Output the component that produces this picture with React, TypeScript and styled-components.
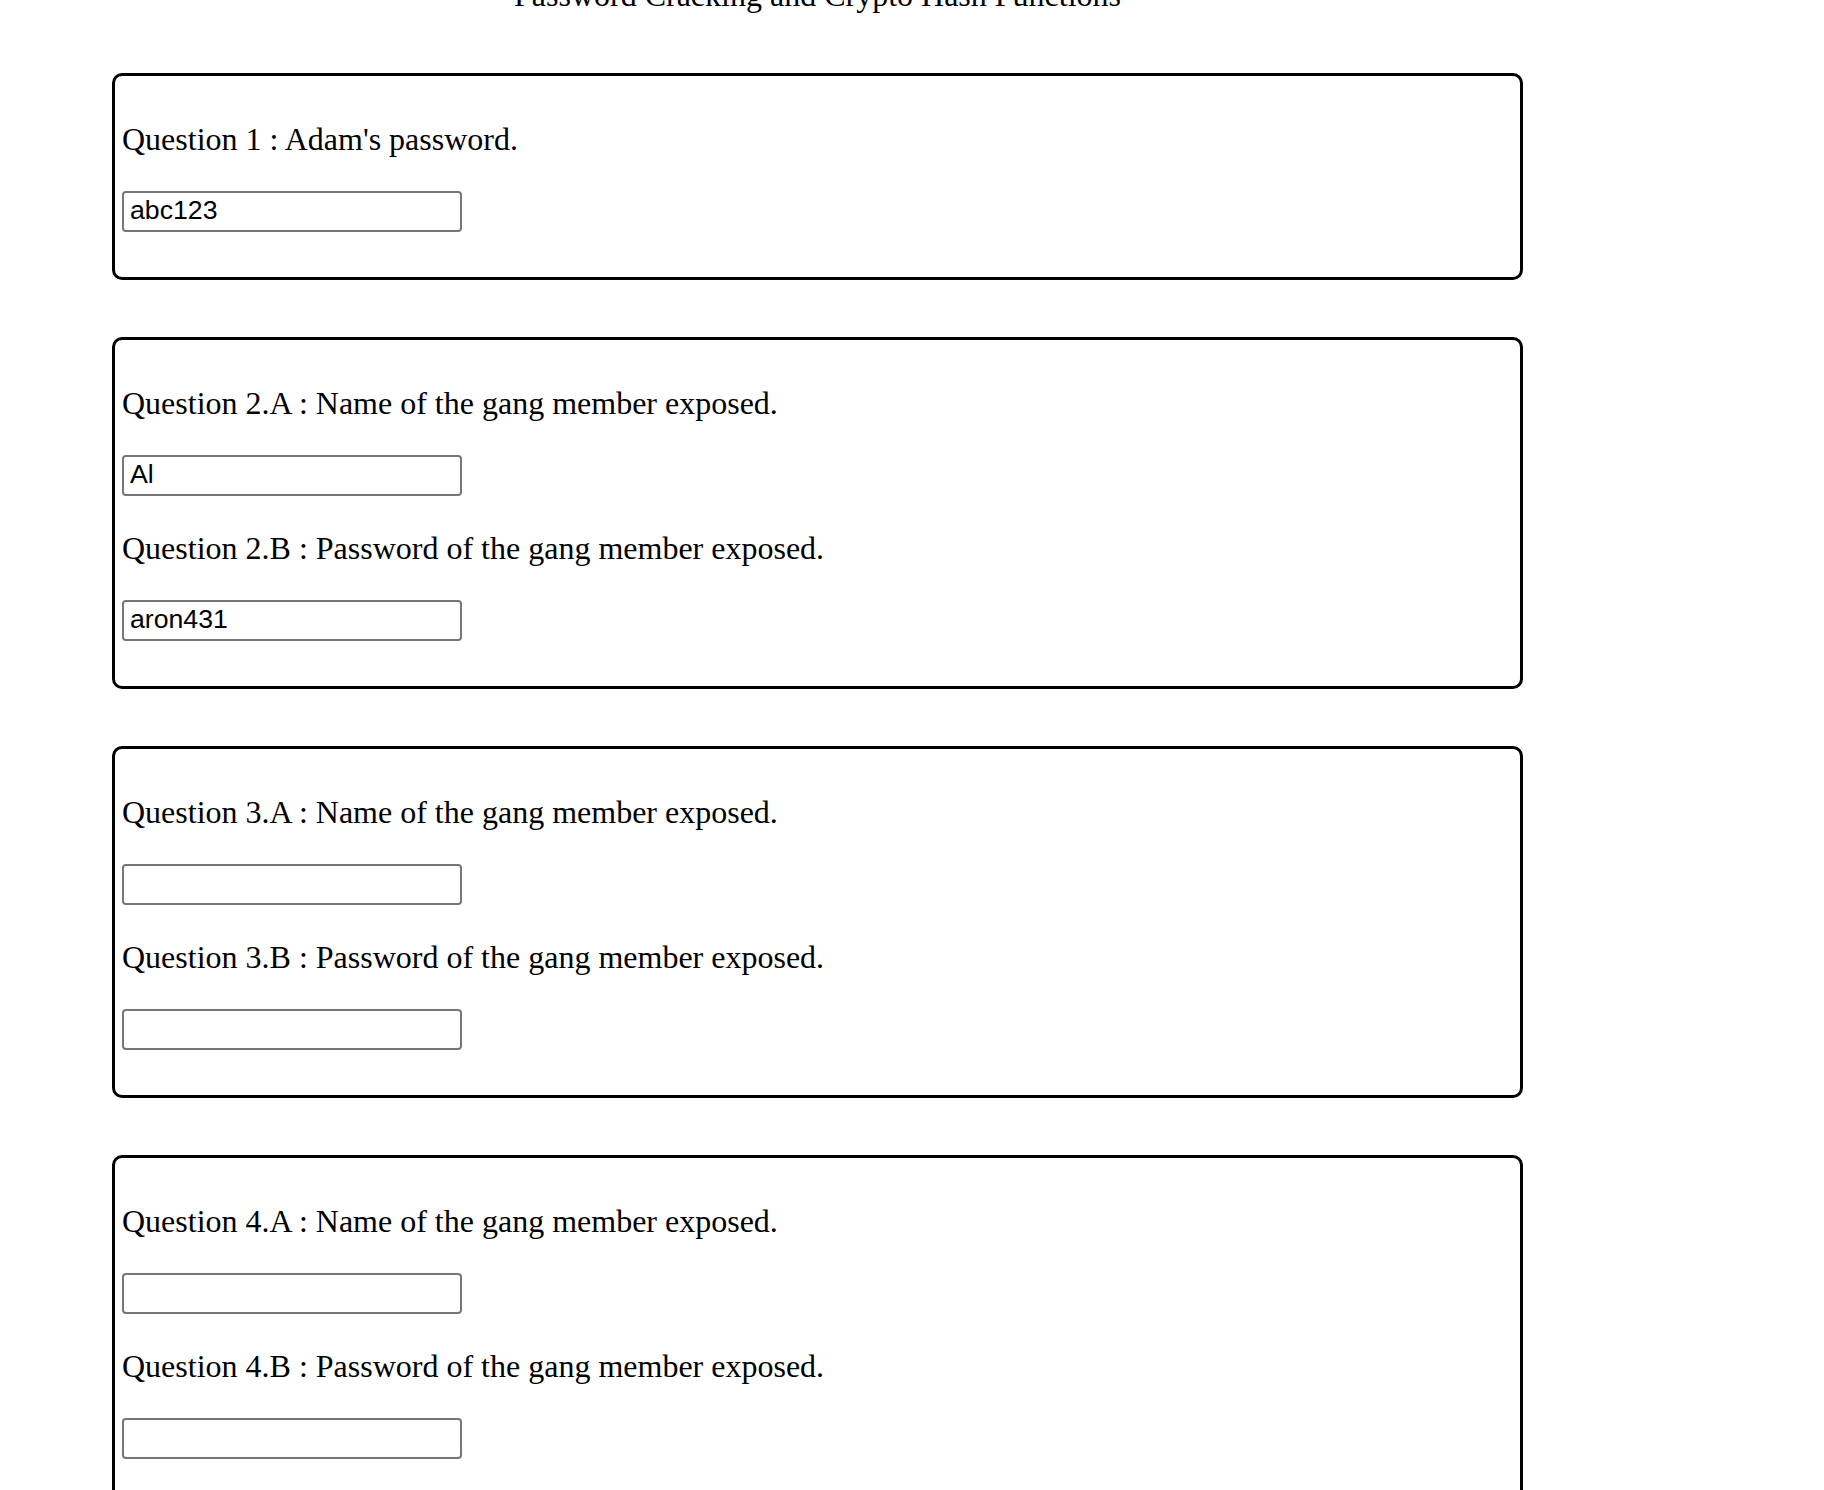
import React from "react";
import styled, { createGlobalStyle } from "styled-components";

const GlobalStyle = createGlobalStyle`
  html, body {
    margin: 0;
    padding: 0;
    background: #ffffff;
    overflow: hidden;
  }
  body {
    font-family: "Liberation Serif", "Times New Roman", serif;
    color: #000000;
  }
`;

const Page = styled.main`
  display: flex;
  flex-direction: column;
  width: 1411px;
  margin: -23px 0 0 112px;
`;

const Title = styled.h1`
  margin: 0 0 60px;
  font-size: 32px;
  line-height: 36px;
  font-weight: normal;
  text-align: center;
`;

const Cards = styled.div`
  display: flex;
  flex-direction: column;
  gap: 57px;
`;

const Card = styled.section`
  display: flex;
  flex-direction: column;
  align-items: flex-start;
  gap: 34px;
  padding: 45px 7px 45px;
  border: 3px solid #000000;
  border-radius: 10px;
`;

const Label = styled.label`
  display: block;
  font-size: 32px;
  line-height: 36px;
`;

const Answer = styled.input`
  box-sizing: border-box;
  display: block;
  width: 340px;
  height: 41px;
  margin: 0;
  padding: 0 6px 2px;
  border: 2px solid #767676;
  border-radius: 4px;
  background: #ffffff;
  font-family: "Liberation Sans", Arial, sans-serif;
  font-size: 26.67px;
  color: #000000;
  outline: none;
`;

type Question = { id: string; label: string; value: string };

const groups: Question[][] = [
  [{ id: "q1", label: "Question 1 : Adam's password.", value: "abc123" }],
  [
    { id: "q2a", label: "Question 2.A : Name of the gang member exposed.", value: "Al" },
    { id: "q2b", label: "Question 2.B : Password of the gang member exposed.", value: "aron431" },
  ],
  [
    { id: "q3a", label: "Question 3.A : Name of the gang member exposed.", value: "" },
    { id: "q3b", label: "Question 3.B : Password of the gang member exposed.", value: "" },
  ],
  [
    { id: "q4a", label: "Question 4.A : Name of the gang member exposed.", value: "" },
    { id: "q4b", label: "Question 4.B : Password of the gang member exposed.", value: "" },
  ],
];

export default function App() {
  return (
    <>
      <GlobalStyle />
      <Page>
        <Title>Password Cracking and Crypto Hash Functions</Title>
        <Cards>
          {groups.map((group, i) => (
            <Card key={i}>
              {group.map((q) => (
                <React.Fragment key={q.id}>
                  <Label htmlFor={q.id}>{q.label}</Label>
                  <Answer id={q.id} type="text" defaultValue={q.value} />
                </React.Fragment>
              ))}
            </Card>
          ))}
        </Cards>
      </Page>
    </>
  );
}
